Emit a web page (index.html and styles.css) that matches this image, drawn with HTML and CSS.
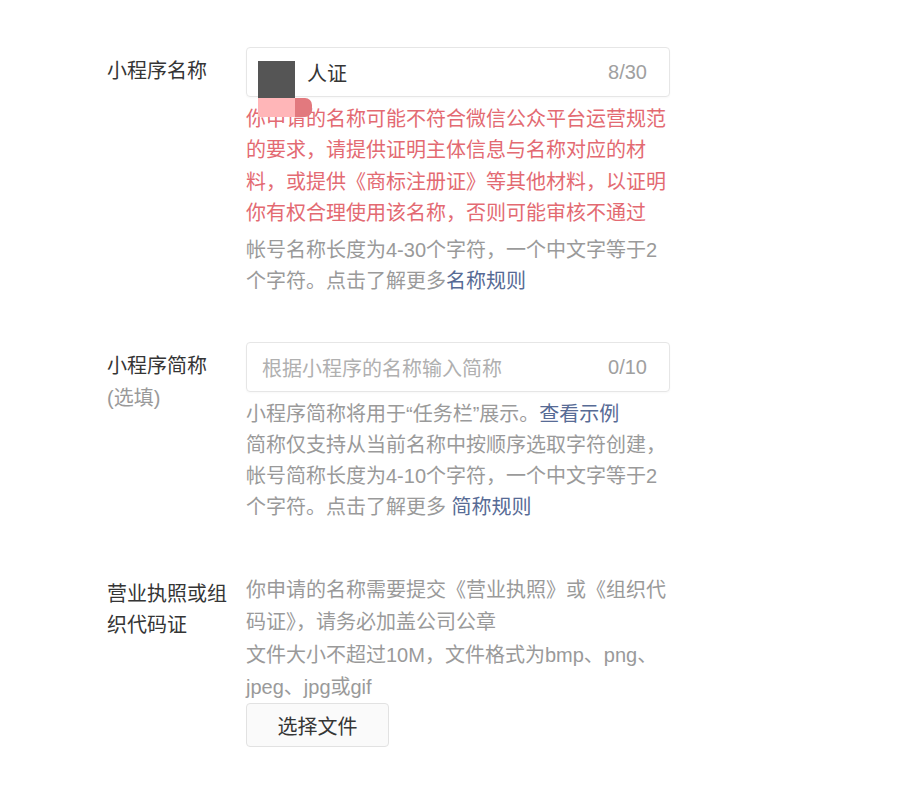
FILE: index.html
```html
<!DOCTYPE html>
<html lang="zh-CN">
<head>
<meta charset="utf-8">
<title>小程序信息</title>
<link rel="stylesheet" href="styles.css">
</head>
<body>
<div class="form">
  <div class="row row-name">
    <div class="label">小程序名称</div>
    <div class="field">
      <div class="input">
        <span class="value">人证</span>
        <span class="count">8/30</span>
      </div>
      <div class="redact">
        <div class="redact-dark"></div>
        <div class="redact-pink"><span class="pink-a"></span><span class="pink-b"></span></div>
      </div>
      <p class="error">你申请的名称可能不符合微信公众平台运营规范的要求，请提供证明主体信息与名称对应的材料，或提供《商标注册证》等其他材料，以证明你有权合理使用该名称，否则可能审核不通过</p>
      <p class="tip">帐号名称长度为4-30个字符，一个中文字等于2个字符。点击了解更多<a class="link" href="#">名称规则</a></p>
    </div>
  </div>

  <div class="row row-short">
    <div class="label">小程序简称<br><span class="optional">(选填)</span></div>
    <div class="field">
      <div class="input">
        <span class="placeholder">根据小程序的名称输入简称</span>
        <span class="count">0/10</span>
      </div>
      <p class="tip tip-first">小程序简称将用于“任务栏”展示。<a class="link" href="#">查看示例</a></p>
      <p class="tip">简称仅支持从当前名称中按顺序选取字符创建，</p>
      <p class="tip">帐号简称长度为4-10个字符，一个中文字等于2个字符。点击了解更多 <a class="link" href="#">简称规则</a></p>
    </div>
  </div>

  <div class="row row-license">
    <div class="label label-plain">营业执照或组织代码证</div>
    <div class="field">
      <p class="tip tip-loose">你申请的名称需要提交《营业执照》或《组织代码证》，请务必加盖公司公章</p>
      <p class="tip tip-loose">文件大小不超过10M，文件格式为bmp、png、jpeg、jpg或gif</p>
      <button class="btn" type="button">选择文件</button>
    </div>
  </div>
</div>
</body>
</html>
```
FILE: styles.css
```css
* { box-sizing: border-box; }
html, body { margin: 0; padding: 0; background: #fff; }
body {
  font-family: "Liberation Sans", "Noto Sans CJK SC", sans-serif;
  font-size: 20px;
  color: #353535;
}
.form {
  padding: 47px 0 0 107px;
}
.row {
  display: flex;
}
.row-short { margin-top: 45px; }
.row-license { margin-top: 51px; }
.label {
  width: 125px;
  flex-shrink: 0;
  margin-right: 14px;
  padding-top: 9px;
  line-height: 31.5px;
  color: #353535;
}
.label-plain { padding-top: 5px; line-height: 30.5px; }
.optional { color: #9a9a9a; }
.field {
  width: 424px;
  position: relative;
}
.input {
  height: 50px;
  border: 1px solid #e6e6e6;
  border-radius: 4px;
  display: flex;
  align-items: center;
  justify-content: space-between;
  padding: 0 22px 0 15px;
  box-shadow: 0 1px 2px rgba(0, 0, 0, 0.03);
}
.value {
  padding-left: 45px;
  color: #353535;
}
.placeholder { color: #b0b0b0; }
.count { color: #a0a0a0; }
.redact {
  position: absolute;
  left: 12px;
  top: 14px;
}
.redact-dark {
  width: 37px;
  height: 37px;
  background: #555555;
}
.redact-pink {
  display: flex;
  height: 19px;
}
.pink-a {
  width: 37px;
  background: #ffb6b8;
}
.pink-b {
  width: 17px;
  background: #e2797e;
  border-radius: 0 7px 7px 0;
}
p { margin: 0; }
.error {
  margin-top: 7px;
  color: #e36a72;
  line-height: 31.3px;
}
.tip {
  color: #9a9a9a;
  line-height: 31px;
}
.row-name .tip { margin-top: 6px; }
.tip-first { margin-top: 7px; }
.tip-loose { line-height: 32.2px; }
.link {
  color: #576b95;
  text-decoration: none;
}
.btn {
  display: block;
  width: 143px;
  height: 44px;
  margin-top: 0;
  border: 1px solid #e2e2e2;
  border-radius: 4px;
  background: #fafafa;
  font-family: inherit;
  font-size: 20px;
  color: #353535;
  cursor: pointer;
}
```
